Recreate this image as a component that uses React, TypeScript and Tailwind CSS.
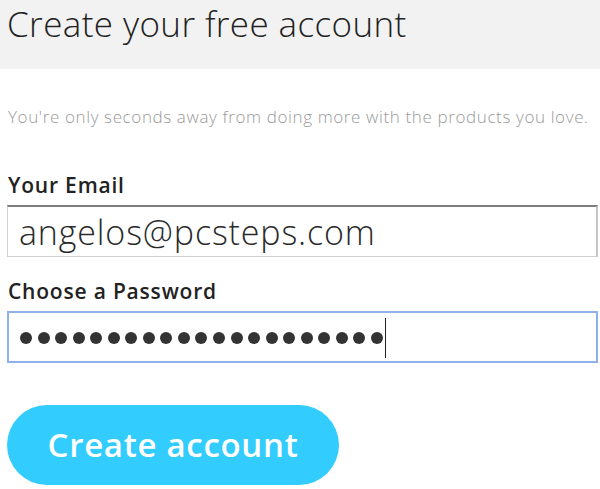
const DOTS = Array.from({ length: 21 }, (_, i) => i)

export default function App() {
  return (
    <div className="w-[600px] h-[489px] bg-white font-['Open_Sans',sans-serif] overflow-hidden">
      <div className="h-[69px] bg-[#f2f2f2] pl-[7px] pt-[1px]">
        <h1 className="text-[35px] leading-[46px] tracking-[0.4px] text-[#222] font-light">Create your free account</h1>
      </div>

      <p className="mt-[37px] pl-[8px] text-[17px] leading-[22px] tracking-[0.62px] text-[#9a9a9a] font-light">
        You're only seconds away from doing more with the products you love.
      </p>

      <div className="mt-[44px] px-[7px]">
        <label className="block pl-[1px] text-[21px] leading-[26px] tracking-[0.8px] font-semibold text-[#222]">Your Email</label>
        <div className="mt-[7px] h-[52px] w-[591px] border border-[#d0d0d0] border-t-2 border-t-[#7d7d7d] border-r-2 border-r-[#c4c4c4] flex items-center pl-[11px]">
          <span className="text-[34px] leading-[40px] tracking-[0.85px] text-[#2a2a2a] font-light">angelos@pcsteps.com</span>
        </div>

        <label className="block mt-[21px] pl-[1px] text-[21px] leading-[26px] tracking-[0.8px] font-semibold text-[#222]">Choose a Password</label>
        <div className="mt-[7px] h-[52px] w-[591px] border-2 border-[#8fb0ea] flex items-center pl-[11px] pt-[2px]">
          <div className="flex items-center gap-[5.55px]">
            {DOTS.map(i => (
              <span key={i} className="w-[12px] h-[12px] rounded-full bg-[#333]" />
            ))}
          </div>
          <span className="ml-[2px] w-px h-[40px] bg-[#222]" />
        </div>

        <button className="mt-[42px] h-[80px] w-[332px] rounded-full bg-[#33ccff] text-white text-[33px] tracking-[0.7px] font-semibold flex items-center justify-center">
          Create account
        </button>
      </div>
    </div>
  )
}
